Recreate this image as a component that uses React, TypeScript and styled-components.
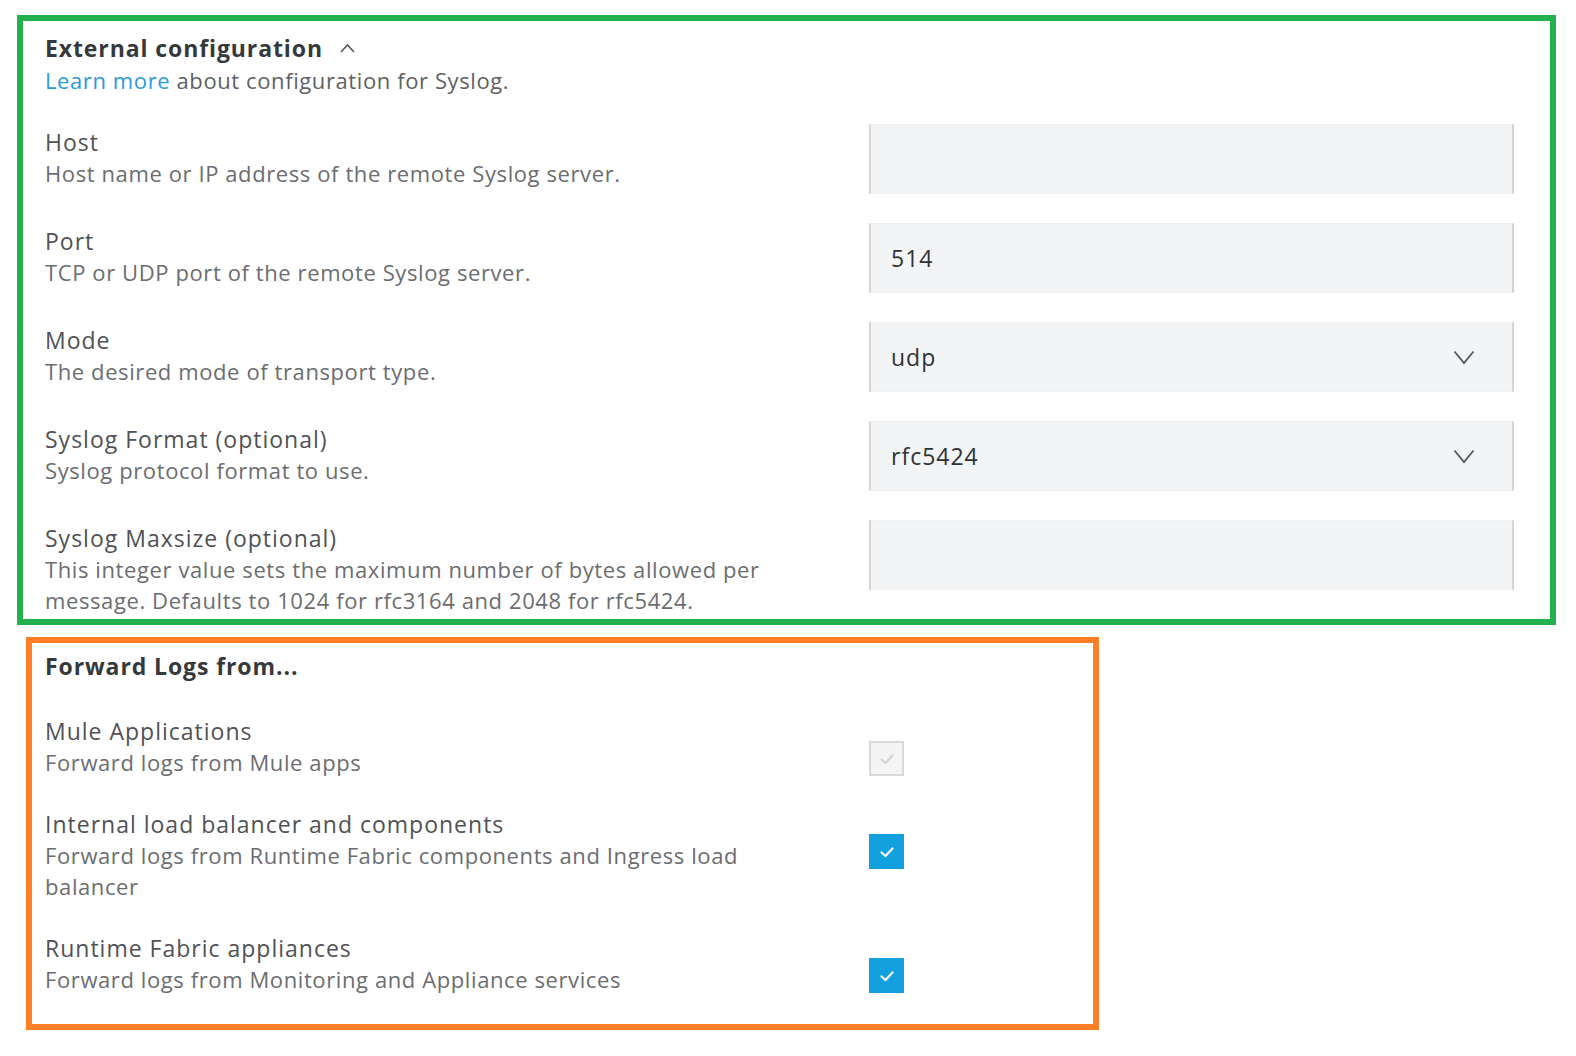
import { FC } from 'react';
import styled, { createGlobalStyle } from 'styled-components';

const GlobalStyle = createGlobalStyle`
  body {
    margin: 0;
    background: #ffffff;
    font-family: 'Open Sans', 'Noto Sans', sans-serif;
  }
`;

const Page = styled.div`
  padding: 15px 0 0 17px;
  display: flex;
  flex-direction: column;
  align-items: flex-start;
`;

const Frame = styled.section<{ $color: string }>`
  box-sizing: border-box;
  border: 6px solid ${props => props.$color};
  overflow: hidden;
`;

const ConfigFrame = styled(Frame)`
  width: 1539px;
  height: 610px;
  padding: 11px 36px 0 22px;
`;

const ForwardFrame = styled(Frame)`
  width: 1073px;
  height: 393px;
  margin: 12px 0 0 9px;
  padding: 7px 0 0 13px;
`;

const TitleRow = styled.div`
  display: flex;
  align-items: center;
  gap: 17px;
`;

const Title = styled.h2`
  margin: 0;
  font-size: 23px;
  line-height: 32px;
  font-weight: 700;
  letter-spacing: 0.9px;
  color: #36393c;
`;

const Intro = styled.p`
  margin: 0;
  font-size: 22px;
  line-height: 32px;
  letter-spacing: 0.6px;
  color: #5f6164;
`;

const Link = styled.a`
  color: #2b9ad8;
  text-decoration: none;
`;

const FieldList = styled.div<{ $top: number; $gap: number }>`
  display: flex;
  flex-direction: column;
  gap: ${props => props.$gap}px;
  margin-top: ${props => props.$top}px;
`;

const FieldRow = styled.div<{ $control: number }>`
  display: grid;
  grid-template-columns: 824px ${props => props.$control}px;
  align-items: start;
`;

const FieldText = styled.div<{ $offset: number }>`
  padding-top: ${props => props.$offset}px;
  max-width: 750px;
`;

const Label = styled.div`
  font-size: 23px;
  line-height: 31px;
  letter-spacing: 1px;
  color: #505255;
`;

const Help = styled.div`
  font-size: 22px;
  line-height: 31px;
  letter-spacing: 0.6px;
  color: #6b6d70;
`;

const InputBox = styled.div`
  box-sizing: border-box;
  height: 70px;
  display: flex;
  align-items: center;
  justify-content: space-between;
  padding: 0 37px 0 20px;
  background: #f3f4f5;
  border-left: 2px solid #d2d4d6;
  border-right: 2px solid #d2d4d6;
  border-top: 1px solid #eff0f1;
  border-bottom: 1px solid #eff0f1;
  font-size: 23px;
  letter-spacing: 1px;
  color: #303236;
`;

const Check = styled.div<{ $checked: boolean }>`
  box-sizing: border-box;
  width: 35px;
  height: 35px;
  margin-top: 25px;
  display: flex;
  align-items: center;
  justify-content: center;
  background: ${props => (props.$checked ? '#12a0df' : '#f4f4f4')};
  border: 2px solid ${props => (props.$checked ? '#12a0df' : '#d9d9d9')};
`;

const ChevronDown = () => (
  <svg width="22" height="15" viewBox="0 0 22 15" fill="none">
    <path d="M1.5 1.5 L11 13 L20.5 1.5" stroke="#55585c" strokeWidth="1.8" />
  </svg>
);

const ChevronUp = () => (
  <svg width="15" height="10" viewBox="0 0 15 10" fill="none">
    <path d="M1 9 L7.5 2 L14 9" stroke="#55585c" strokeWidth="1.6" />
  </svg>
);

const Tick = ({ color }: { color: string }) => (
  <svg width="16" height="12" viewBox="0 0 16 12" fill="none">
    <path d="M2.5 6.5 L6.5 10 L13.5 2.5" stroke={color} strokeWidth="2.2" strokeLinecap="round" strokeLinejoin="round" />
  </svg>
);

type Field = {
  label: string;
  help: string;
  value?: string;
  select?: boolean;
};

const fields: Field[] = [
  { label: 'Host', help: 'Host name or IP address of the remote Syslog server.' },
  { label: 'Port', help: 'TCP or UDP port of the remote Syslog server.', value: '514' },
  { label: 'Mode', help: 'The desired mode of transport type.', value: 'udp', select: true },
  { label: 'Syslog Format (optional)', help: 'Syslog protocol format to use.', value: 'rfc5424', select: true },
  {
    label: 'Syslog Maxsize (optional)',
    help: 'This integer value sets the maximum number of bytes allowed per message. Defaults to 1024 for rfc3164 and 2048 for rfc5424.',
  },
];

type Source = {
  label: string;
  help: string;
  checked: boolean;
};

const sources: Source[] = [
  { label: 'Mule Applications', help: 'Forward logs from Mule apps', checked: false },
  {
    label: 'Internal load balancer and components',
    help: 'Forward logs from Runtime Fabric components and Ingress load balancer',
    checked: true,
  },
  { label: 'Runtime Fabric appliances', help: 'Forward logs from Monitoring and Appliance services', checked: true },
];

const App: FC = () => {
  return (
    <Page>
      <GlobalStyle />
      <ConfigFrame $color="#22b14c">
        <TitleRow>
          <Title>External configuration</Title>
          <ChevronUp />
        </TitleRow>
        <Intro>
          <Link href="#">Learn more</Link> about configuration for Syslog.
        </Intro>
        <FieldList $top={28} $gap={29}>
          {fields.map(field => (
            <FieldRow key={field.label} $control={645}>
              <FieldText $offset={3}>
                <Label>{field.label}</Label>
                <Help>{field.help}</Help>
              </FieldText>
              <InputBox>
                <span>{field.value}</span>
                {field.select && <ChevronDown />}
              </InputBox>
            </FieldRow>
          ))}
        </FieldList>
      </ConfigFrame>

      <ForwardFrame $color="#ff7f27">
        <Title>Forward Logs from...</Title>
        <FieldList $top={34} $gap={31}>
          {sources.map(source => (
            <FieldRow key={source.label} $control={35}>
              <FieldText $offset={0}>
                <Label>{source.label}</Label>
                <Help>{source.help}</Help>
              </FieldText>
              <Check $checked={source.checked}>
                <Tick color={source.checked ? '#ffffff' : '#d4d4d4'} />
              </Check>
            </FieldRow>
          ))}
        </FieldList>
      </ForwardFrame>
    </Page>
  );
};

export default App;
